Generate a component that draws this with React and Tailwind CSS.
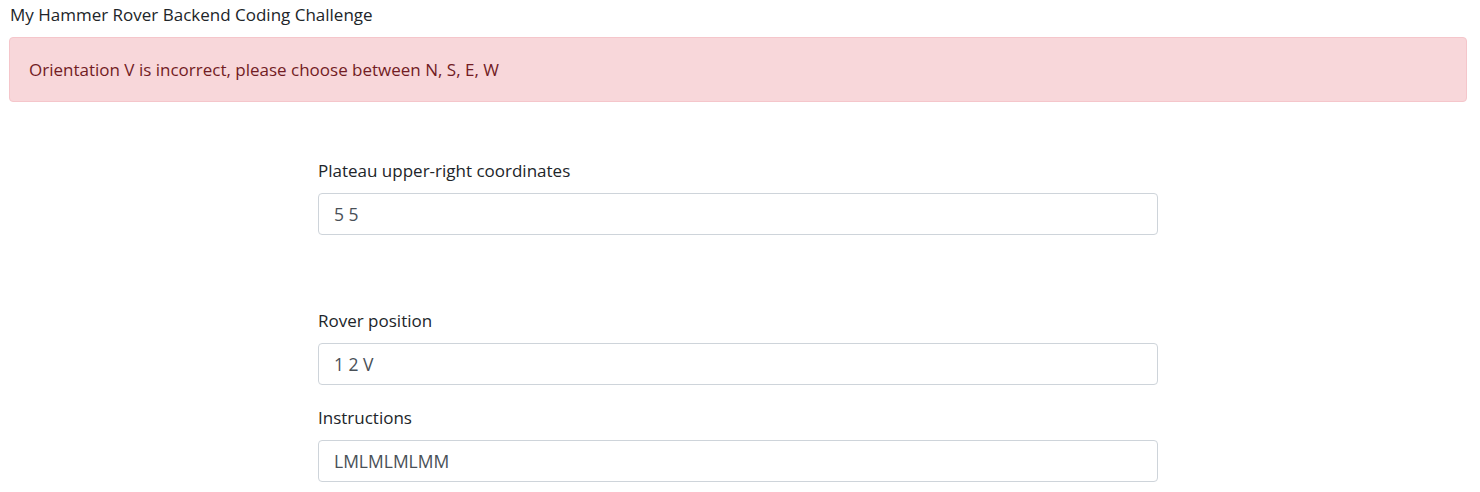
import React from 'react';

const Field = ({ label, value, className = '' }) => (
  <div className={className}>
    <label className="block text-[17px] leading-6 text-[#212529] mb-[10px]">{label}</label>
    <input
      readOnly
      value={value}
      className="block w-full h-[42px] px-[15px] text-[17.5px] text-[#495057] bg-white border border-[#ced4da] rounded-[4px] outline-none"
    />
  </div>
);

export default function App() {
  return (
    <div className="min-h-screen bg-white pl-[9px] pr-[13px] pt-[3px] font-['Open_Sans',sans-serif]">
      <div className="pl-[1px] text-[17px] leading-6 text-[#212529]">My Hammer Rover Backend Coding Challenge</div>

      <div className="mt-[10px] h-[65px] flex items-center px-[19px] bg-[#f8d7da] border border-[#f5c6cb] rounded-[4px] text-[#721c24] text-[17px]">
        Orientation V is incorrect, please choose between N, S, E, W
      </div>

      <form className="w-[840px] mx-auto">
        <Field className="mt-[57px]" label="Plateau upper-right coordinates" value="5 5" />
        <Field className="mt-[74px]" label="Rover position" value="1 2 V" />
        <Field className="mt-[21px]" label="Instructions" value="LMLMLMLMM" />
      </form>
    </div>
  );
}
